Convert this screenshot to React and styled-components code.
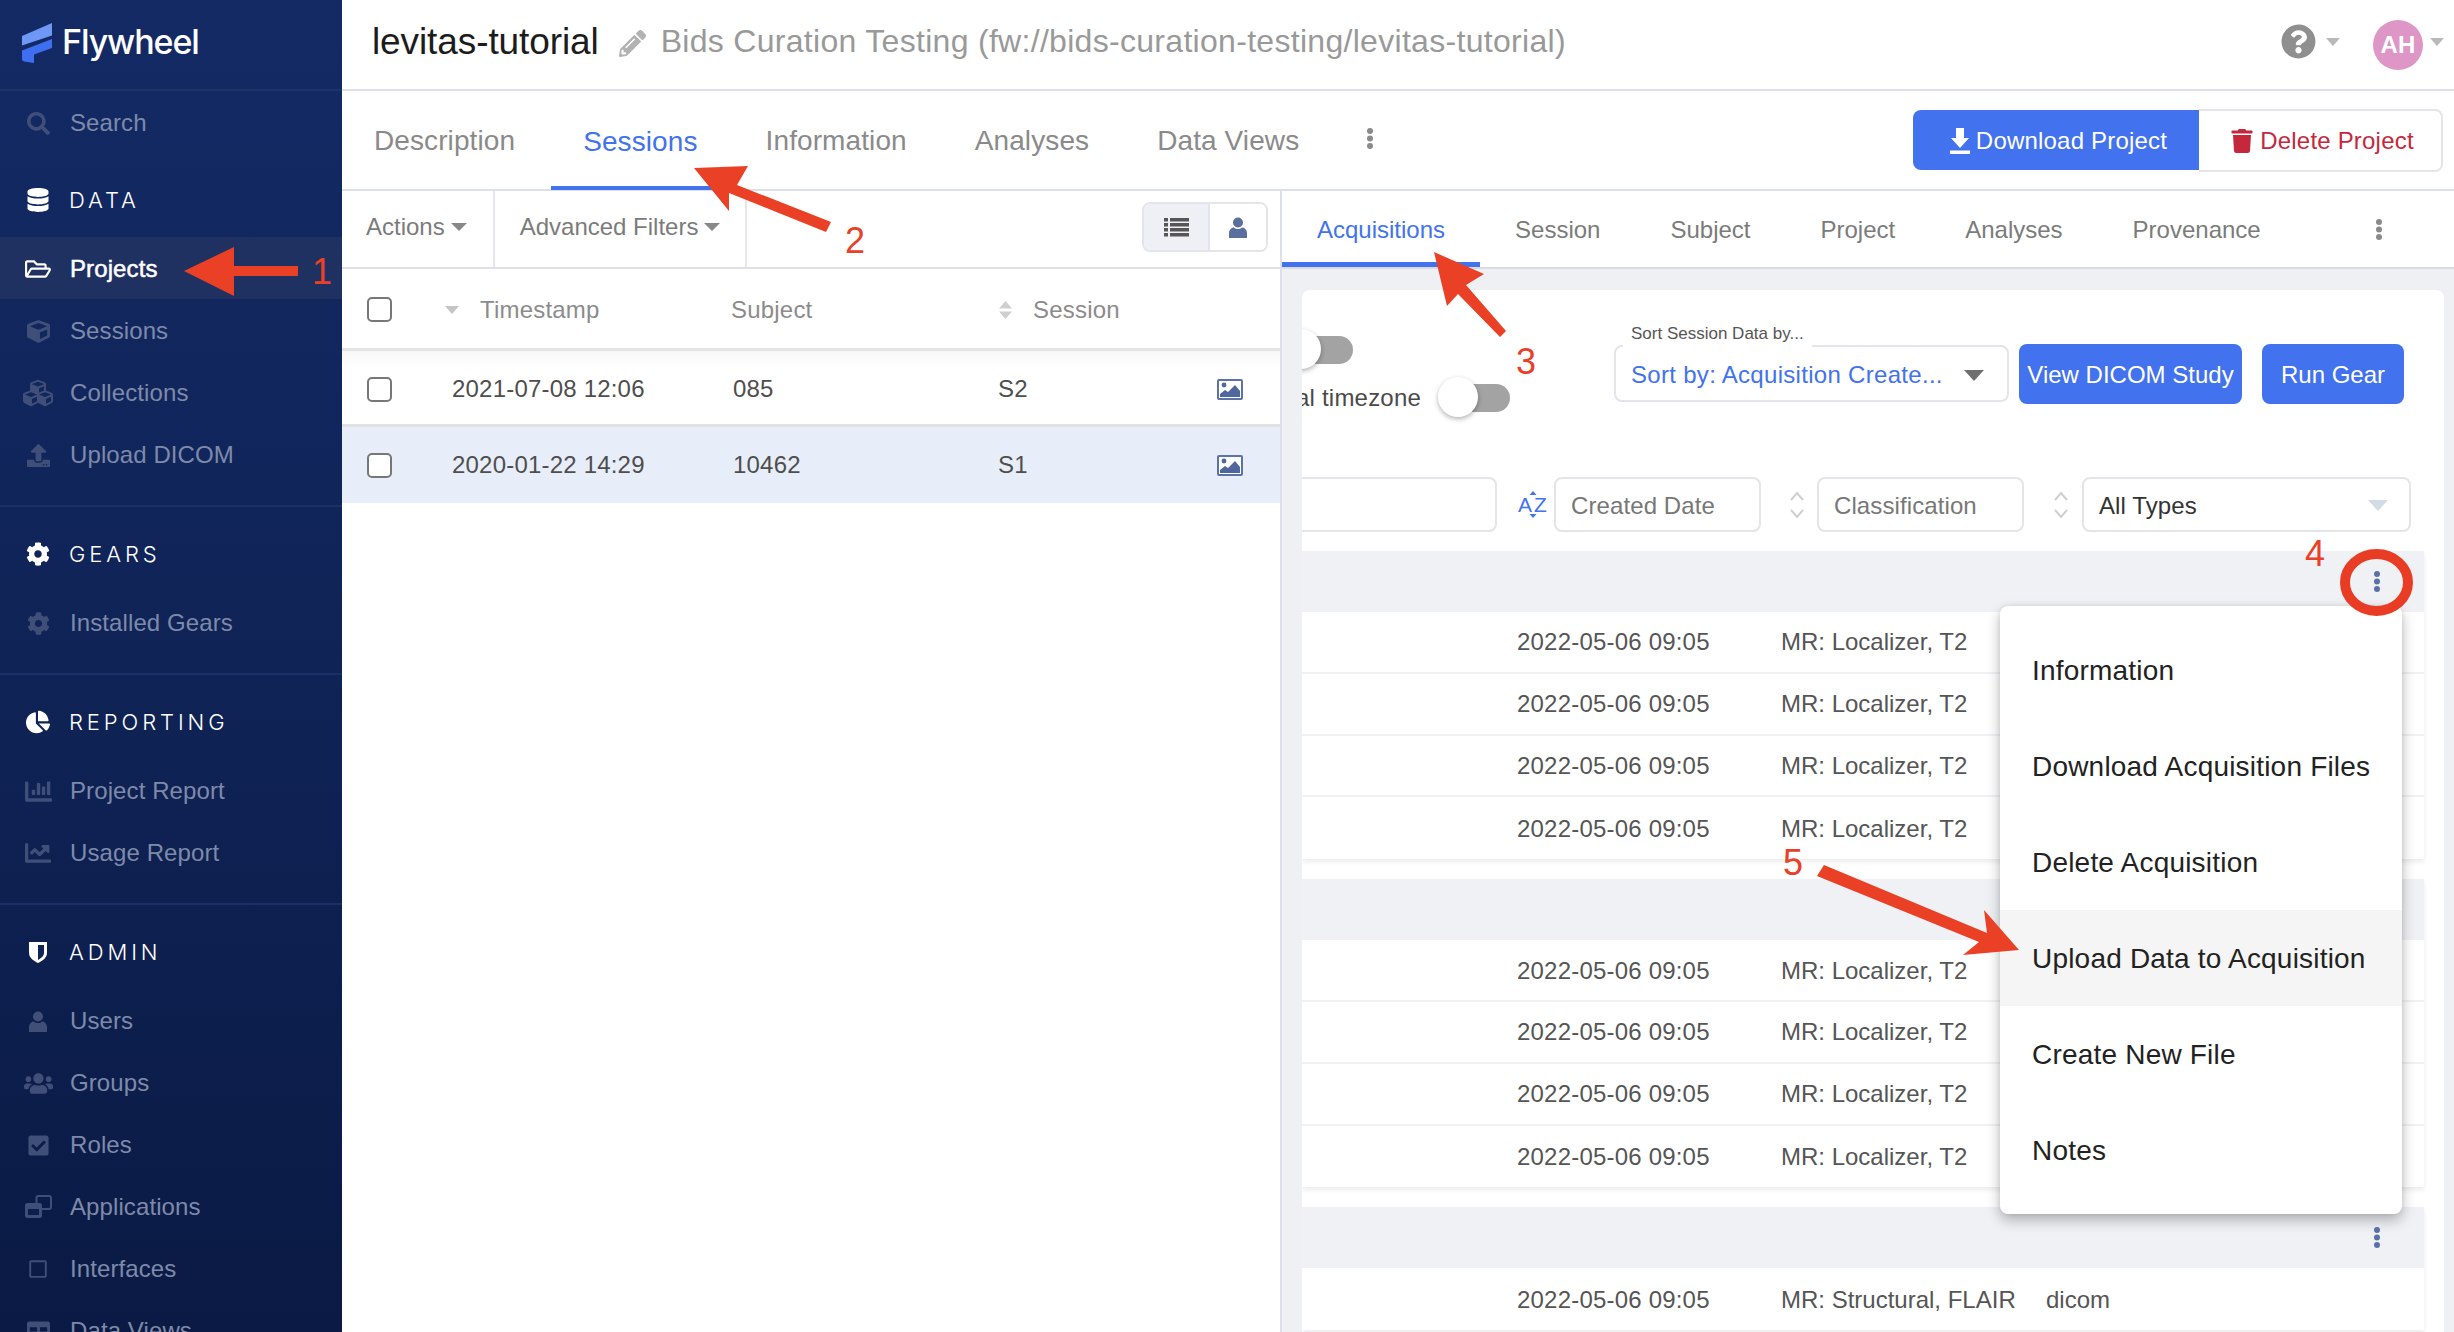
import React from 'react';
import styled, { createGlobalStyle } from 'styled-components';
import {
  FaSearch, FaDatabase, FaRegFolderOpen, FaCube, FaCubes, FaUpload, FaCog, FaChartPie,
  FaChartBar, FaChartLine, FaUsers, FaCheckSquare,
  FaRegSquare, FaTable, FaPencilAlt, FaTrash, FaQuestionCircle,
} from 'react-icons/fa';

const Global = createGlobalStyle`
  html, body { margin: 0; padding: 0; width: 100%; height: 100%; overflow: hidden; background: #fff; }
  #root { height: 100%; }
  * { box-sizing: border-box; }
  body { font-family: "Liberation Sans", Arial, sans-serif; letter-spacing: 0.2px; }
  button { letter-spacing: inherit; }
`;

const Shell = styled.div`
  position: relative; display: flex; width: 2454px; height: 1332px; overflow: hidden;
`;
const Sidebar = styled.aside`
  flex: 0 0 342px; height: 1332px; overflow: hidden;
  background: linear-gradient(180deg, #132a65 0%, #0f2356 50%, #0a1a44 100%);
`;
const Brand = styled.div`
  height: 91px; display: flex; align-items: center; padding-left: 22px; gap: 9px;
  border-bottom: 2px solid #1d3468;
`;
const BrandName = styled.span`
  color: #fff; font-family: "Inter", sans-serif; font-weight: 500; font-size: 34px; letter-spacing: -1.1px;
  margin-top: -7px;
`;
const Section = styled.section`
  padding: 8px 0 20px; border-bottom: ${p => (p.$last ? 'none' : '2px solid #1a3066')};
`;
const Heading = styled.div`
  height: 76px; padding-top: 2px; display: flex; align-items: center; color: #fff;
  font-family: "Inter", sans-serif; font-size: 22px; font-weight: 300; letter-spacing: 3.9px;
`;
const HeadIcon = styled.span`
  flex: 0 0 32px; margin: 0 15px 0 22px; display: flex; justify-content: center; font-size: 24px;
`;
const Item = styled.div`
  height: 62px; padding-top: 2px; display: flex; align-items: center; font-size: 24px; letter-spacing: 0.1px;
  color: ${p => (p.$active ? '#fff' : '#7e8aa9')};
  background: ${p => (p.$active ? '#1f3161' : 'transparent')};
  -webkit-text-stroke: ${p => (p.$active ? '0.5px #fff' : '0')};
`;
const ItemIcon = styled.span`
  flex: 0 0 32px; margin: 0 16px 0 22px; display: flex; justify-content: center;
  color: ${p => (p.$active ? '#fff' : '#3f4f78')}; font-size: ${p => p.$size || 23}px;
`;

const Main = styled.main`
  flex: 1; min-width: 0; display: flex; flex-direction: column;
`;
const TopBar = styled.header`
  height: 91px; flex: none; display: flex; align-items: center; padding: 0 10px 6px 30px;
  border-bottom: 2px solid #dde0e8;
`;
const Title = styled.h1`
  margin: 0; font-size: 37px; font-weight: 400; color: #1c1c1c; letter-spacing: -0.1px;
`;
const TitleEdit = styled.span`
  color: #b2b2b2; font-size: 27px; display: flex; margin: 4px 15px 0 20px;
`;
const Subtitle = styled.span`
  font-size: 32px; color: #999; letter-spacing: 0.3px;
`;
const TopRight = styled.div`
  margin-left: auto; display: flex; align-items: center; color: #8f8f8f;
`;
const Caret = styled.span`
  display: inline-block; width: 0; height: 0; margin-left: ${p => p.$ml ?? 8}px; flex: none;
  border-left: ${p => p.$w || 7}px solid transparent; border-right: ${p => p.$w || 7}px solid transparent;
  border-top: ${p => p.$h || 8}px solid ${p => p.$color || '#b9b9b9'};
  margin-right: ${p => p.$mr || 0}px;
`;
const Avatar = styled.span`
  width: 50px; height: 50px; border-radius: 50%; background: #dd96c6; color: #fff;
  display: flex; align-items: center; justify-content: center; font-weight: 700; font-size: 24px;
  margin-left: 33px; margin-top: 6px;
`;

const NavRow = styled.nav`
  height: 100px; flex: none; display: flex; align-items: center; gap: 4px;
  border-bottom: 2px solid #dde0e8; padding-right: 11px;
`;
const NavTab = styled.div`
  height: 100%; display: flex; align-items: center; padding: 2px 32px 0; font-size: 28px; letter-spacing: 0.1px;
  color: ${p => (p.$active ? '#4272ee' : '#8a8a8a')};
  box-shadow: ${p => (p.$active ? 'inset 0 -4px 0 #4272ee' : 'none')};
  margin-bottom: ${p => (p.$active ? '-2px' : '0')};
`;
const MoreSlot = styled.span`
  display: flex; color: ${p => p.$color || '#8a8a8a'}; margin: ${p => p.$m || 0};
`;
const NavActions = styled.div`
  margin-left: auto; display: flex; align-items: center;
`;
const PrimaryNav = styled.button`
  width: 286px; height: 60px; border: 0; background: #4272ee; color: #fff; font: inherit; font-size: 24px;
  border-radius: 8px 0 0 8px; display: flex; align-items: center; justify-content: center; gap: 6px; padding: 2px 0 0 5px;
`;
const DangerNav = styled.button`
  width: 244px; height: 63px; border: 2px solid #e3e5ea; border-left: 0; background: #fff; color: #c5283d;
  font: inherit; font-size: 24px; border-radius: 0 8px 8px 0; display: flex; align-items: center;
  justify-content: center; gap: 6px; padding: 2px 0 0 4px;
`;

const Panels = styled.div`
  flex: 1; min-height: 0; display: flex;
`;
const LeftPanel = styled.div`
  flex: 0 0 940px; border-right: 2px solid #dde0e8; display: flex; flex-direction: column;
`;
const Toolbar = styled.div`
  height: 78px; flex: none; display: flex; align-items: stretch; border-bottom: 2px solid #dde0e8;
`;
const ToolMenu = styled.div`
  display: flex; align-items: center; padding: 0 ${p => p.$pr}px 4px ${p => p.$pl}px; font-size: 24px; color: #7b7b7b;
  border-right: 2px solid #e6e8ee; letter-spacing: 0;
`;
const ViewSwitch = styled.div`
  margin: 11px 12px 0 auto; width: 126px; height: 50px; display: flex; border: 2px solid #e3e5ec; border-radius: 8px;
  overflow: hidden;
`;
const ViewButton = styled.span`
  flex: ${p => (p.$on ? '0 0 66px' : 1)}; display: flex; align-items: center; justify-content: center;
  background: ${p => (p.$on ? '#eef0f5' : '#fff')}; color: ${p => (p.$on ? '#565656' : '#5b6f9f')}; font-size: 21px;
  border-right: ${p => (p.$on ? '2px solid #e3e5ec' : '0')};
`;
const TableHead = styled.div`
  height: 82px; flex: none; display: grid; grid-template-columns: 78px 286px 267px 1fr; align-items: center;
  padding: 2px 0 0 25px; border-bottom: 3px solid #e4e4e4; font-size: 24px; color: #8b8b8b;
`;
const HeadCell = styled.div`
  display: flex; align-items: center; gap: ${p => p.$gap || 0}px;
`;
const Box = styled.span`
  display: block; width: 25px; height: 25px; border: 2px solid #777; border-radius: 5px; background: #fff;
`;
const TableRow = styled.div`
  height: 76px; flex: none; display: grid; grid-template-columns: 85px 281px 265px 219px 1fr; align-items: center;
  padding: 3px 0 0 25px; border-bottom: 3px solid ${p => (p.$sel ? 'transparent' : '#e2e2e2')}; font-size: 24px; color: #4e4e4e;
  background: ${p => (p.$sel ? '#e8eef9' : 'linear-gradient(180deg,#f8f8f8 0,#fff 18px)')};
`;
const CheckCell = styled.div`
  width: 60px;
`;

const RightPanel = styled.div`
  flex: 1; min-width: 0; display: flex; flex-direction: column;
`;
const SubTabs = styled.div`
  height: 78px; flex: none; display: flex; align-items: center; border-bottom: 2px solid #d9dbe1;
`;
const SubTab = styled.div`
  height: 100%; display: flex; align-items: center; padding: 2px 35px 0; font-size: 24px; letter-spacing: 0;
  color: ${p => (p.$active ? '#4272ee' : '#7b7b7b')};
  box-shadow: ${p => (p.$active ? 'inset 0 -5px 0 #4272ee' : 'none')};
`;
const RightBody = styled.div`
  flex: 1; min-height: 0; background: #eef0f4; padding: 21px 10px 0 20px; overflow: hidden;
`;
const Card = styled.div`
  background: #fff; border-radius: 8px 8px 0 0; overflow: hidden; height: 1100px; padding-bottom: 20px;
`;
const TopRow = styled.div`
  height: 187px; display: flex; justify-content: flex-end; align-items: flex-start; padding: 46px 40px 0 0;
`;
const ToggleCol = styled.div`
  flex: none; display: flex; flex-direction: column; align-items: flex-end; margin-right: 104px; gap: 20px;
`;
const ToggleRow = styled.div`
  display: flex; align-items: center; gap: 17px; font-size: 24px; color: #4a4a4a; white-space: nowrap;
  height: 28px; margin-right: ${p => p.$mr || 0}px;
`;
const Switch = styled.span`
  position: relative; display: block; width: 72px; height: 28px;
  &::before { content: ''; position: absolute; left: 12px; right: 0; top: 0; bottom: 0; background: #a3a3a3; border-radius: 14px; }
  &::after { content: ''; position: absolute; left: 0; top: -7px; width: 40px; height: 40px; border-radius: 50%;
    background: #fff; box-shadow: 0 2px 5px rgba(0,0,0,.3); }
`;
const SortSelect = styled.div`
  position: relative; flex: none; width: 395px; height: 57px; margin: 9px 10px 0 0; border: 2px solid #e3e5ea; border-radius: 8px;
  display: flex; align-items: center; padding: 3px 23px 0 15px; color: #4272ee; font-size: 24px; letter-spacing: 0.3px;
  justify-content: space-between;
`;
const SortLegend = styled.span`
  position: absolute; left: 7px; top: -23px; padding: 0 8px 4px; background: #fff; font-size: 17px; color: #555; letter-spacing: 0;
`;
const ActionBtn = styled.button`
  flex: none; height: 60px; margin: 8px ${p => p.$mr || 0}px 0 0; width: ${p => p.$w}px; border: 0; border-radius: 8px;
  background: #4272ee; color: #fff; font: inherit; font-size: 24px; padding: 2px 0 0; letter-spacing: 0;
`;
const FilterRow = styled.div`
  height: 55px; display: flex; justify-content: flex-end; align-items: center; padding-right: 33px; margin-bottom: 19px;
`;
const FilterBox = styled.div`
  flex: none; width: ${p => p.$w}px; height: 55px; border: 2px solid #e3e5ea; border-radius: 8px; display: flex; align-items: center;
  padding: 2px 15px 0; font-size: 24px; letter-spacing: 0.1px; color: ${p => (p.$dark ? '#333' : '#777')}; justify-content: space-between;
`;
const FilterGap = styled.span`
  flex: none; width: ${p => p.$w}px; display: flex; justify-content: center; align-items: center; padding-left: ${p => p.$pl || 0}px;
`;
const Group = styled.div`
  margin: 0 20px 20px 0; box-shadow: 0 3px 5px rgba(0,0,0,.08);
`;
const GroupHead = styled.div`
  height: 61px; background: #eff1f5; display: flex; align-items: center; justify-content: flex-end; padding-right: 43px;
`;
const AcqRow = styled.div`
  height: 61.8px; padding-top: 1px; display: grid; grid-template-columns: 215px 264px 265px 1fr; align-items: center; font-size: 24px; color: #555;
  background: #fff; border-bottom: 2px solid #f0f1f4;
  &:last-child { border-bottom: 0; }
`;
const AcqClass = styled.span`
  letter-spacing: 0;
`;

const Menu = styled.div`
  position: absolute; left: 2000px; top: 606px; width: 402px; height: 608px; padding: 16px 0; background: #fff; border-radius: 8px;
  box-shadow: 0 6px 14px rgba(0,0,0,.28), 0 0 4px rgba(0,0,0,.08); z-index: 5;
`;
const MenuItem = styled.div`
  height: 96px; display: flex; align-items: center; padding: 2px 0 0 32px; font-size: 28px; color: #222; letter-spacing: 0.2px;
  background: ${p => (p.$hover ? '#f5f5f5' : 'transparent')};
`;
const Overlay = styled.svg`
  position: absolute; left: 0; top: 0; z-index: 6; pointer-events: none;
`;
const Step = styled.span`
  position: absolute; left: ${p => p.$x}px; top: ${p => p.$y}px; z-index: 6; font-size: 36px; line-height: 36px; color: #e9402a;
`;

const Dots = ({ color = '#8a8a8a', h = 21 }) => (
  <svg width="8" height={h} viewBox="0 0 8 21"><g fill={color}><circle cx="4" cy="3" r="3" /><circle cx="4" cy="10.500" r="3" /><circle cx="4" cy="18" r="3" /></g></svg>
);
const ImageIcon = () => (
  <svg width="26" height="21" viewBox="0 0 26 21">
    <rect x="1" y="1" width="24" height="19" rx="1" fill="#fff" stroke="#5b73a8" strokeWidth="2" />
    <path d="M3 18v-3l5-4 3 2 7-7 5 6v6z" fill="#50679d" /><circle cx="7" cy="6" r="2.400" fill="#50679d" />
  </svg>
);
const UpDown = ({ color = '#cfcfcf', solid }) => solid ? (
  <svg width="15" height="20" viewBox="0 0 15 20"><path d="M7.500 1l6.500 7.500H1zM7.500 19L1 11.500h13z" fill={color} /></svg>
) : (
  <svg width="16" height="28" viewBox="0 0 16 28" fill="none" stroke={color} strokeWidth="2"><path d="M2 9l6-7 6 7M2 19l6 7 6-7" /></svg>
);
const AZIcon = () => (
  <svg width="30" height="28" viewBox="0 0 30 28" fill="#4272ee">
    <path d="M15 0l3.500 4h-7zM15 27l-3.500-4h7z" />
    <text x="0" y="21" fontFamily="Liberation Sans" fontSize="21">A</text>
    <text x="16" y="21" fontFamily="Liberation Sans" fontSize="21">Z</text>
  </svg>
);
const DownloadIcon = () => (
  <svg width="20" height="26" viewBox="0 0 20 26" fill="#fff"><path d="M6 0h8v10h5l-9 10-9-10h5zM0 22.500h20V26H0z" /></svg>
);
const LogoMark = () => (
  <svg width="31" height="43" viewBox="0 0 31 43">
    <path d="M0 13L30 0v12.500L0 22.500z" fill="#6f97f6" />
    <path d="M0 27.500L30 16v9l-18 6.500V40L2 38.500 0 37z" fill="#3d6ff0" />
  </svg>
);
const ListGlyph = () => (
  <svg width="25" height="19" viewBox="0 0 25 19" fill="currentColor">
    {[0, 5, 10, 15].map(y => <g key={y}><rect x="0" y={y} width="4" height="3.500" /><rect x="6" y={y} width="19" height="3.500" /></g>)}
  </svg>
);
const UserGlyph = ({ w = 18, h = 21 }) => (
  <svg width={w} height={h} viewBox="0 0 18 21" fill="currentColor">
    <circle cx="9" cy="5.500" r="5" /><path d="M0 21v-5c0-3.500 3-5.500 5-5.500 1 1 2.500 1.500 4 1.500s3-.5 4-1.500c2 0 5 2 5 5.500v5c-2 .5-16 .5-18 0z" />
  </svg>
);
const ShieldGlyph = () => (
  <svg width="20" height="21" viewBox="0 0 20 21">
    <path d="M1 0h18v11c0 5-5 8-9 10-4-2-9-5-9-10z" fill="#fff" />
    <path d="M10 3h6v8c0 3-3 5-6 7z" fill="#0f2356" />
  </svg>
);
const AppsGlyph = () => (
  <svg width="28" height="24" viewBox="0 0 28 24" fill="none">
    <rect x="12.500" y="1" width="14.500" height="13" rx="2" stroke="currentColor" strokeWidth="2" />
    <rect x="1" y="8" width="17" height="15" rx="2.500" fill="currentColor" />
    <rect x="4" y="14" width="11" height="6" fill="#0c1e4c" />
  </svg>
);

const AcqRows = ({ label = 'MR: Localizer, T2', type = '', count = 4 }) => Array.from({ length: count }).map((_, i) => (
  <AcqRow key={i}><span /><span>2022-05-06 09:05</span><AcqClass>{label}</AcqClass><AcqClass>{type}</AcqClass></AcqRow>
));

export default function App() {
  return (
    <Shell>
      <Global />
      <Sidebar>
        <Brand><LogoMark /><BrandName>Flywheel</BrandName></Brand>
        <Item><ItemIcon><FaSearch /></ItemIcon>Search</Item>
        <Section>
          <Heading><HeadIcon><FaDatabase /></HeadIcon>DATA</Heading>
          <Item $active><ItemIcon $active $size={26}><FaRegFolderOpen /></ItemIcon>Projects</Item>
          <Item><ItemIcon><FaCube /></ItemIcon>Sessions</Item>
          <Item><ItemIcon $size={30}><FaCubes /></ItemIcon>Collections</Item>
          <Item><ItemIcon><FaUpload /></ItemIcon>Upload DICOM</Item>
        </Section>
        <Section>
          <Heading><HeadIcon><FaCog /></HeadIcon>GEARS</Heading>
          <Item><ItemIcon><FaCog /></ItemIcon>Installed Gears</Item>
        </Section>
        <Section>
          <Heading><HeadIcon><FaChartPie /></HeadIcon>REPORTING</Heading>
          <Item><ItemIcon $size={27}><FaChartBar /></ItemIcon>Project Report</Item>
          <Item><ItemIcon $size={26}><FaChartLine /></ItemIcon>Usage Report</Item>
        </Section>
        <Section $last>
          <Heading><HeadIcon><ShieldGlyph /></HeadIcon>ADMIN</Heading>
          <Item><ItemIcon><UserGlyph /></ItemIcon>Users</Item>
          <Item><ItemIcon $size={29}><FaUsers /></ItemIcon>Groups</Item>
          <Item><ItemIcon><FaCheckSquare /></ItemIcon>Roles</Item>
          <Item><ItemIcon><AppsGlyph /></ItemIcon>Applications</Item>
          <Item><ItemIcon $size={20}><FaRegSquare /></ItemIcon>Interfaces</Item>
          <Item><ItemIcon><FaTable /></ItemIcon>Data Views</Item>
        </Section>
      </Sidebar>

      <Main>
        <TopBar>
          <Title>levitas-tutorial</Title>
          <TitleEdit><FaPencilAlt /></TitleEdit>
          <Subtitle>Bids Curation Testing (fw://bids-curation-testing/levitas-tutorial)</Subtitle>
          <TopRight>
            <FaQuestionCircle size={35} />
            <Caret $ml={10} />
            <Avatar>AH</Avatar>
            <Caret $ml={7} />
          </TopRight>
        </TopBar>
        <NavRow>
          <NavTab>Description</NavTab>
          <NavTab $active>Sessions</NavTab>
          <NavTab>Information</NavTab>
          <NavTab>Analyses</NavTab>
          <NavTab>Data Views</NavTab>
          <MoreSlot $m="0 0 4px 31px"><Dots /></MoreSlot>
          <NavActions>
            <PrimaryNav><DownloadIcon />Download Project</PrimaryNav>
            <DangerNav><FaTrash size={24} />Delete Project</DangerNav>
          </NavActions>
        </NavRow>
        <Panels>
          <LeftPanel>
            <Toolbar>
              <ToolMenu $pl={24} $pr={26}>Actions<Caret $ml={6} $w={8} $h={8} $color="#888" /></ToolMenu>
              <ToolMenu $pl={25} $pr={25}>Advanced Filters<Caret $ml={6} $w={8} $h={8} $color="#888" /></ToolMenu>
              <ViewSwitch>
                <ViewButton $on><ListGlyph /></ViewButton>
                <ViewButton><UserGlyph /></ViewButton>
              </ViewSwitch>
            </Toolbar>
            <TableHead>
              <HeadCell><Box /></HeadCell>
              <HeadCell $gap={21}><Caret $ml={0} $color="#c5c5c5" />Timestamp</HeadCell>
              <HeadCell>Subject</HeadCell>
              <HeadCell $gap={20}><UpDown solid />Session</HeadCell>
            </TableHead>
            <TableRow>
              <CheckCell><Box /></CheckCell><span>2021-07-08 12:06</span><span>085</span><span>S2</span><ImageIcon />
            </TableRow>
            <TableRow $sel>
              <CheckCell><Box /></CheckCell><span>2020-01-22 14:29</span><span>10462</span><span>S1</span><ImageIcon />
            </TableRow>
          </LeftPanel>
          <RightPanel>
            <SubTabs>
              <SubTab $active>Acquisitions</SubTab>
              <SubTab>Session</SubTab>
              <SubTab>Subject</SubTab>
              <SubTab>Project</SubTab>
              <SubTab>Analyses</SubTab>
              <SubTab>Provenance</SubTab>
              <MoreSlot $m="0 0 0 79px"><Dots /></MoreSlot>
            </SubTabs>
            <RightBody>
              <Card>
                <TopRow>
                  <ToggleCol>
                    <ToggleRow $mr={157}><Switch /></ToggleRow>
                    <ToggleRow>Show in local timezone<Switch /></ToggleRow>
                  </ToggleCol>
                  <SortSelect>
                    <SortLegend>Sort Session Data by...</SortLegend>
                    <span>Sort by: Acquisition Create...</span>
                    <Caret $ml={0} $w={10} $h={11} $color="#6f6f6f" />
                  </SortSelect>
                  <ActionBtn $w={223} $mr={20}>View DICOM Study</ActionBtn>
                  <ActionBtn $w={142}>Run Gear</ActionBtn>
                </TopRow>
                <FilterRow>
                  <FilterBox $w={260} />
                  <FilterGap $w={57} $pl={14}><AZIcon /></FilterGap>
                  <FilterBox $w={207}>Created Date</FilterBox>
                  <FilterGap $w={56} $pl={16}><UpDown /></FilterGap>
                  <FilterBox $w={207}>Classification</FilterBox>
                  <FilterGap $w={58} $pl={16}><UpDown /></FilterGap>
                  <FilterBox $w={329} $dark>All Types<Caret $ml={0} $mr={6} $w={10} $h={11} $color="#d3dae8" /></FilterBox>
                </FilterRow>
                <Group>
                  <GroupHead><Dots color="#5a71a8" /></GroupHead>
                  <AcqRows />
                </Group>
                <Group>
                  <GroupHead />
                  <AcqRows />
                </Group>
                <Group>
                  <GroupHead><Dots color="#5a71a8" /></GroupHead>
                  <AcqRows label="MR: Structural, FLAIR" type="dicom" count={1} />
                </Group>
              </Card>
            </RightBody>
          </RightPanel>
        </Panels>
      </Main>

      <Menu>
        <MenuItem>Information</MenuItem>
        <MenuItem>Download Acquisition Files</MenuItem>
        <MenuItem>Delete Acquisition</MenuItem>
        <MenuItem $hover>Upload Data to Acquisition</MenuItem>
        <MenuItem>Create New File</MenuItem>
        <MenuItem>Notes</MenuItem>
      </Menu>

      <Overlay width="2454" height="1332" viewBox="0 0 2454 1332">
        <g fill="#ea4025">
          <path d="M184 271L234 247V266H298V276H234V296z" />
          <path d="M694 168L748 166L737 185L831 222L826 232L729 193L729 211z" />
          <path d="M1434 252L1484 274L1466 285L1506 331L1500 337L1458 294L1447 306z" />
          <path d="M2019 950L1984 910L1987 933L1824 865L1817 876L1979 942L1963 955z" />
        </g>
        <ellipse cx="2376.500" cy="582.500" rx="31.500" ry="28.500" fill="none" stroke="#e93c24" strokeWidth="10" />
      </Overlay>
      <Step $x={312} $y={254}>1</Step>
      <Step $x={845} $y={223}>2</Step>
      <Step $x={1516} $y={344}>3</Step>
      <Step $x={2305} $y={536}>4</Step>
      <Step $x={1783} $y={845}>5</Step>
    </Shell>
  );
}
